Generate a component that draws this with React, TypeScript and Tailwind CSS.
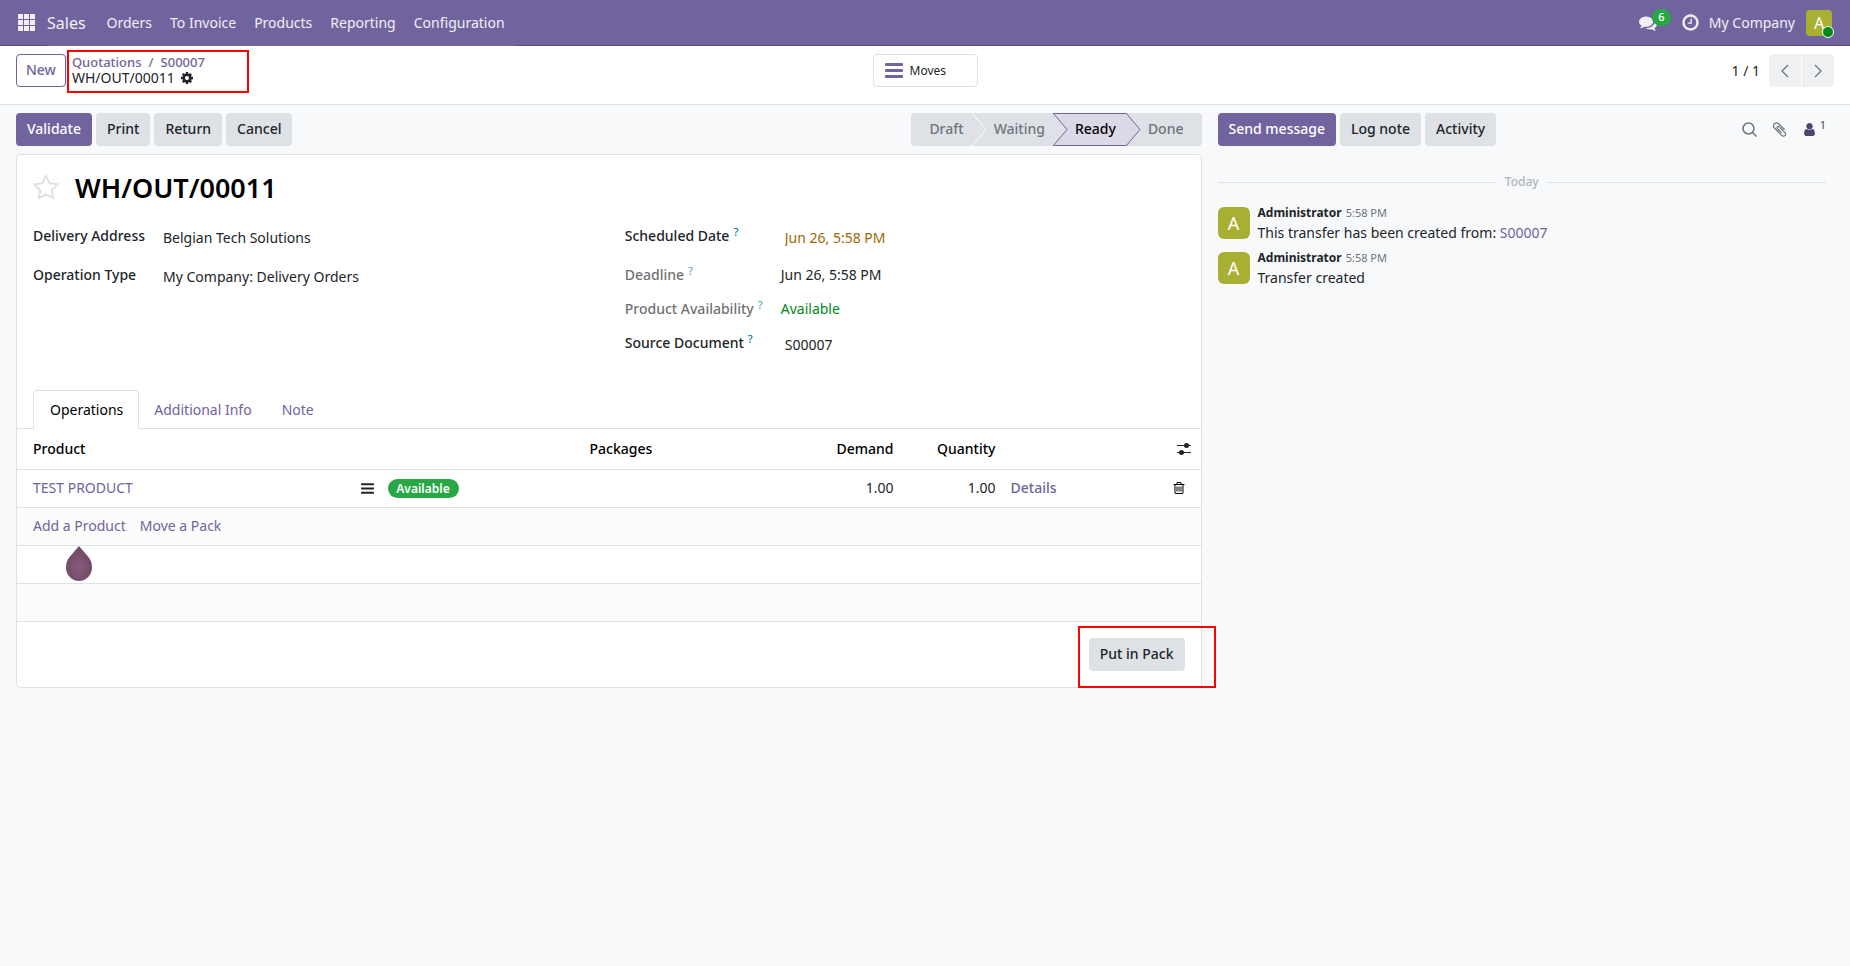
import type { ReactNode } from "react";
import { clsx } from "clsx";

const ICONS = {
  comments:
    "M1408 768q0 139-94 257t-256.5 186.5-353.5 68.5q-86 0-176-16-124 88-278 128-36 9-86 16h-3q-11 0-20.5-8t-11.5-21q-1-3-1-6.5t.5-6.5 2-6l2.5-5 3.5-5.5 4-5 4.5-5 4-4.5q5-6 23-25t26-29.5 22.5-29 25-38.5 20.5-44q-124-72-195-177t-71-224q0-139 94-257t256.5-186.5 353.5-68.5 353.5 68.5 256.5 186.5 94 257zm384 256q0 120-71 224.5t-195 176.5q10 24 20.5 44t25 38.5 22.5 29 26 29.5 23 25q1 1 4 4.5t4.5 5 4 5 3.5 5.5l2.5 5 2 6 .5 6.5-1 6.5q-3 14-13 22t-22 7q-50-7-86-16-154-40-278-128-90 16-176 16-271 0-472-132 58 4 88 4 161 0 309-45t264-129q125-92 192-212t67-254q0-77-23-152 129 71 204 178t75 230z",
  clock:
    "M1024 544v448q0 14-9 23t-23 9h-320q-14 0-23-9t-9-23v-64q0-14 9-23t23-9h224v-352q0-14 9-23t23-9h64q14 0 23 9t9 23zm416 352q0-148-73-273t-198-198-273-73-273 73-198 198-73 273 73 273 198 198 273 73 273-73 198-198 73-273zm224 0q0 209-103 385.5t-279.5 279.5-385.5 103-385.5-103-279.5-279.5-103-385.5 103-385.5 279.5-279.5 385.5-103 385.5 103 279.5 279.5 103 385.5z",
  cog: "M1152 896q0-106-75-181t-181-75-181 75-75 181 75 181 181 75 181-75 75-181zm512-109v222q0 12-8 23t-20 13l-185 28q-19 54-39 91 35 50 107 138 10 12 10 25t-9 23q-27 37-99 108t-94 71q-12 0-26-9l-138-108q-44 23-91 38-16 136-29 186-7 28-36 28h-222q-14 0-24.5-8.5t-11.5-21.5l-28-184q-49-16-90-37l-141 107q-10 9-25 9-14 0-25-11-126-114-165-168-7-10-7-23 0-12 8-23 15-21 51-66.5t54-70.5q-27-50-41-99l-183-27q-13-2-21-12.5t-8-23.5v-222q0-12 8-23t19-13l186-28q14-46 39-92-40-57-107-138-10-12-10-24 0-10 9-23 26-36 98.5-107.5t94.5-71.5q13 0 26 10l138 107q44-23 91-38 16-136 29-186 7-28 36-28h222q14 0 24.5 8.5t11.5 21.5l28 184q49 16 90 37l142-107q9-9 24-9 13 0 25 10 129 119 165 170 7 8 7 22 0 12-8 23-15 21-51 66.5t-54 70.5q26 50 41 98l183 28q13 2 21 12.5t8 23.5z",
  paperclip:
    "M1596 1385q0 117-79 196t-196 79q-135 0-235-100l-777-776q-113-115-113-271 0-159 110-270t269-111q158 0 273 113l605 606q10 10 10 22 0 16-30.5 46.5t-46.5 30.5q-13 0-23-10l-606-607q-79-77-181-77-106 0-179 75t-73 181q0 105 76 181l776 777q63 63 145 63 64 0 106-42t42-106q0-82-63-145l-581-581q-26-24-60-24-29 0-48 19t-19 48q0 32 25 59l410 410q10 10 10 22 0 16-31 47t-47 31q-12 0-22-10l-410-410q-63-61-63-149 0-82 57-139t139-57q88 0 149 63l581 581q100 98 100 235z",
  trash:
    "M704 736v576q0 14-9 23t-23 9h-64q-14 0-23-9t-9-23v-576q0-14 9-23t23-9h64q14 0 23 9t9 23zm256 0v576q0 14-9 23t-23 9h-64q-14 0-23-9t-9-23v-576q0-14 9-23t23-9h64q14 0 23 9t9 23zm256 0v576q0 14-9 23t-23 9h-64q-14 0-23-9t-9-23v-576q0-14 9-23t23-9h64q14 0 23 9t9 23zm128 724v-948h-896v948q0 22 7 40.5t14.5 27 10.5 8.5h832q3 0 10.5-8.5t14.5-27 7-40.5zm-672-1076h448l-48-117q-7-9-17-11h-317q-10 2-17 11zm928 32v64q0 14-9 23t-23 9h-96v948q0 83-47 143.5t-113 60.5h-832q-66 0-113-58.5t-47-141.5v-952h-96q-14 0-23-9t-9-23v-64q0-14 9-23t23-9h309l70-167q15-37 54-63t79-26h320q40 0 79 26t54 63l70 167h309q14 0 23 9t9 23z",
  star: "M1201 1004l306-297-422-62-189-382-189 382-422 62 306 297-73 421 378-199 377 199zm527-357q0 22-26 48l-363 354 86 500q1 7 1 20 0 50-41 50-19 0-40-12l-449-236-449 236q-22 12-40 12-21 0-31.5-14.5t-10.5-35.5q0-6 2-20l86-500-364-354q-25-27-25-48 0-37 56-46l502-73 225-455q19-41 49-41t49 41l225 455 502 73q56 9 56 46z",
  user: "M1536 1399q0 109-62.5 187t-150.5 78h-854q-88 0-150.5-78t-62.5-187q0-85 8.5-160.5t31.5-152 58.5-131 94-89 134.5-34.5q131 128 313 128t313-128q76 0 134.5 34.5t94 89 58.5 131 31.5 152 8.5 160.5zm-256-887q0 159-112.5 271.5t-271.5 112.5-271.5-112.5-112.5-271.5 112.5-271.5 271.5-112.5 271.5 112.5 112.5 271.5z",
  bars: "M1664 1344v128q0 26-19 45t-45 19h-1408q-26 0-45-19t-19-45v-128q0-26 19-45t45-19h1408q26 0 45 19t19 45zm0-512v128q0 26-19 45t-45 19h-1408q-26 0-45-19t-19-45v-128q0-26 19-45t45-19h1408q26 0 45 19t19 45zm0-512v128q0 26-19 45t-45 19h-1408q-26 0-45-19t-19-45v-128q0-26 19-45t45-19h1408q26 0 45 19t19 45z",
};

function Icon({ name, className }: { name: keyof typeof ICONS; className?: string }) {
  return (
    <svg viewBox="0 0 1792 1792" fill="currentColor" aria-hidden="true" className={clsx("shrink-0", className)}>
      <path d={ICONS[name]} />
    </svg>
  );
}

function Button({ primary, children }: { primary?: boolean; children: ReactNode }) {
  return (
    <button
      type="button"
      className={clsx(
        "h-[33px] whitespace-nowrap rounded px-[11px] pb-px font-medium",
        primary ? "bg-[#71639e] text-white" : "bg-[#dee2e6] text-[#212529]",
      )}
    >
      {children}
    </button>
  );
}

const MENUS = ["Orders", "To Invoice", "Products", "Reporting", "Configuration"];

function Navbar() {
  return (
    <header className="flex h-[46px] items-stretch border-b border-[#5a4f7f] bg-[#71639e] text-white/90">
      <button type="button" aria-label="Home menu" className="flex w-[47px] items-center pl-[18px]">
        <svg viewBox="0 0 18 18" fill="currentColor" className="size-[18px]">
          {[0, 6, 12].map((y) => [0, 6, 12].map((x) => <rect key={`${x}-${y}`} x={x} y={y} width="5" height="5" />))}
        </svg>
      </button>
      <nav className="-mb-px flex items-center bg-[#71639e]">
        <a href="#sales" className="pr-3 text-base">
          Sales
        </a>
        {MENUS.map((m) => (
          <a key={m} href="#menu" className="px-[9px]">
            {m}
          </a>
        ))}
      </nav>
      <div className="ml-auto flex items-center pr-4">
        <button type="button" aria-label="Messages" className="relative mr-6">
          <Icon name="comments" className="size-[18px]" />
          <span className="absolute -top-[5px] left-[13px] flex h-[17px] w-[19px] items-center justify-center rounded-full bg-[#28a745] text-[11px] font-medium text-white">
            6
          </span>
        </button>
        <button type="button" aria-label="Activities" className="mr-[9px]">
          <Icon name="clock" className="size-[19px]" />
        </button>
        <button type="button" className="mr-[11px]">
          My Company
        </button>
        <button
          type="button"
          aria-label="User menu"
          className="relative mr-[2px] size-[26px] rounded bg-[#a8b034] text-base leading-[26px] text-white"
        >
          A
          <span className="absolute -bottom-[2px] -right-[2px] size-3 rounded-full border border-white bg-[#008818]" />
        </button>
      </div>
    </header>
  );
}

function Chevron({ d }: { d: string }) {
  return (
    <svg viewBox="0 0 10 14" fill="none" stroke="#6c757d" strokeWidth="1.3" className="h-[14px] w-[10px]">
      <path d={d} />
    </svg>
  );
}

function ControlPanel() {
  return (
    <div className="grid grid-cols-[1fr_auto_1fr] items-start border-b border-[#dee2e6] bg-white px-4 pb-[17px] pt-2">
      <div className="flex items-start">
        <button
          type="button"
          className="h-[33px] rounded border border-[#71639e] px-[9px] pb-px font-medium text-[#71639e]"
        >
          New
        </button>
        <div className="relative ml-[6px] flex flex-col">
          <span className="pointer-events-none absolute -left-[5px] -top-[4px] h-[43px] w-[182px] border-2 border-[#f00]" />
          <div className="text-[13px] font-medium leading-4 text-[#6c757d]">
            <a href="#quotations" className="text-[#71639e]">
              Quotations
            </a>
            <span className="px-[7px]">/</span>
            <a href="#s00007" className="text-[#71639e]">
              S00007
            </a>
          </div>
          <div className="flex items-center gap-[5px] leading-4">
            WH/OUT/00011
            <button type="button" aria-label="Actions">
              <Icon name="cog" className="size-[14px]" />
            </button>
          </div>
        </div>
      </div>
      <button
        type="button"
        className="flex h-[33px] w-[105px] items-center gap-[7px] rounded border border-[#dee2e6] pl-[11px] text-xs"
      >
        <svg viewBox="0 0 18 15" fill="#71639e" className="h-[15px] w-[18px]">
          <rect y="0" width="18" height="3" rx="1" />
          <rect y="6" width="18" height="3" rx="1" />
          <rect y="12" width="18" height="3" rx="1" />
        </svg>
        Moves
      </button>
      <div className="flex items-center justify-end">
        <span className="mr-[9px]">1 / 1</span>
        <button
          type="button"
          aria-label="Previous"
          className="flex h-[33px] w-8 items-center justify-center rounded-l bg-[#eff0f2]"
        >
          <Chevron d="M8 1 2 7l6 6" />
        </button>
        <button
          type="button"
          aria-label="Next"
          className="ml-px flex h-[33px] w-8 items-center justify-center rounded-r bg-[#eff0f2]"
        >
          <Chevron d="m2 1 6 6-6 6" />
        </button>
      </div>
    </div>
  );
}

// The arrow tip of the previous stage, laid over the left edge of the next one.
function Tip({ fill, stroke }: { fill: string; stroke: string }) {
  return (
    <svg viewBox="0 0 15 33" className="absolute left-0 top-0 h-[33px] w-[15px]">
      <path d="M0 0 14 16.5 0 33z" fill={fill} />
      <path d="M0 0 14 16.5 0 33" fill="none" stroke={stroke} strokeWidth="1" />
    </svg>
  );
}

function StatusBar() {
  return (
    <div className="flex h-[33px] font-medium text-[#6c757d]">
      <button type="button" className="rounded-l bg-[#dee2e6] pb-px pl-[18px] pr-2">
        Draft
      </button>
      <button type="button" className="relative bg-[#dee2e6] pb-px pl-[22px] pr-2">
        <Tip fill="#dee2e6" stroke="#fff" />
        Waiting
      </button>
      <button
        type="button"
        aria-current="step"
        className="relative border-y border-[#71639e] bg-[#dcd9e7] pb-px pl-[22px] pr-[10px] text-black"
      >
        <span className="absolute -top-px left-0">
          <Tip fill="#dee2e6" stroke="#71639e" />
        </span>
        Ready
      </button>
      <button type="button" className="relative rounded-r bg-[#dee2e6] pb-px pl-[22px] pr-[18px]">
        <Tip fill="#dcd9e7" stroke="#71639e" />
        Done
      </button>
    </div>
  );
}

function Label({ id, help, muted, children }: { id?: string; help?: boolean; muted?: boolean; children: string }) {
  return (
    <label htmlFor={id} className={clsx("whitespace-nowrap font-medium", muted && "opacity-65")}>
      {children}
      {help && <sup className="ml-1 text-[11px] text-[#017e9b]">?</sup>}
    </label>
  );
}

function Field({ id, label, value, className }: { id: string; label: ReactNode; value: string; className?: string }) {
  return (
    <>
      {label}
      <input id={id} defaultValue={value} className={clsx("w-full bg-transparent pl-1 pt-[2px] outline-none", className)} />
    </>
  );
}

function Details() {
  return (
    <div className="grid grid-cols-2 gap-x-8 px-4 leading-[21px]">
      <div className="grid grid-cols-[126px_1fr] auto-rows-[39px] items-start">
        <Field id="partner" label={<Label id="partner">Delivery Address</Label>} value="Belgian Tech Solutions" />
        <Field id="type" label={<Label id="type">Operation Type</Label>} value="My Company: Delivery Orders" />
      </div>
      <div className="grid grid-cols-[156px_1fr] grid-rows-[39px_34px_34px_34px] items-start">
        <Field
          id="date"
          label={
            <Label id="date" help>
              Scheduled Date
            </Label>
          }
          value="Jun 26, 5:58 PM"
          className="text-[#9a6b01]"
        />
        <Label help muted>
          Deadline
        </Label>
        <span>Jun 26, 5:58 PM</span>
        <Label help muted>
          Product Availability
        </Label>
        <span className="text-[#008818]">Available</span>
        <Field
          id="origin"
          label={
            <Label id="origin" help>
              Source Document
            </Label>
          }
          value="S00007"
        />
      </div>
    </div>
  );
}

function Operations() {
  return (
    <table className="w-full table-fixed border-b border-[#dee2e6]">
      <colgroup>
        <col />
        <col className="w-[26px]" />
        <col className="w-[204px]" />
        <col className="w-[200px]" />
        <col className="w-[114px]" />
        <col className="w-[102px]" />
        <col className="w-[160px]" />
        <col className="w-[40px]" />
      </colgroup>
      <thead>
        <tr className="h-[40px] border-b border-[#dee2e6] text-left text-black">
          <th className="pl-4 font-medium">Product</th>
          <th />
          <th />
          <th className="pl-[5px] font-medium">Packages</th>
          <th className="pr-[5px] text-right font-medium">Demand</th>
          <th className="pr-[5px] text-right font-medium">Quantity</th>
          <th />
          <th>
            <button type="button" aria-label="Optional columns" className="ml-4 block">
              <svg viewBox="0 0 14 12" className="h-3 w-[14px]">
                <path d="M0 2.500h14M0 9.500h14" stroke="#212529" />
                <circle cx="9.500" cy="2.500" r="2.500" fill="#212529" />
                <circle cx="4.500" cy="9.500" r="2.500" fill="#212529" />
              </svg>
            </button>
          </th>
        </tr>
      </thead>
      <tbody>
        <tr className="h-[38px] border-b border-[#dee2e6]">
          <td className="pl-4">
            <a href="#product" className="text-[#71639e]">
              TEST PRODUCT
            </a>
          </td>
          <td>
            <button type="button" aria-label="Product moves" className="ml-[5px] block">
              <Icon name="bars" className="size-[15px]" />
            </button>
          </td>
          <td className="pl-[7px] pt-px">
            <span className="block h-[19px] w-[71px] rounded-full bg-[#28a745] text-center text-xs font-semibold leading-[19px] text-white">
              Available
            </span>
          </td>
          <td />
          <td className="pr-[5px] text-right">1.00</td>
          <td className="pr-[5px] text-right">1.00</td>
          <td className="pl-[10px]">
            <button type="button" className="font-medium text-[#71639e]">
              Details
            </button>
          </td>
          <td>
            <button type="button" aria-label="Delete" className="ml-[11px] block text-black">
              <Icon name="trash" className="size-[14px]" />
            </button>
          </td>
        </tr>
        <tr className="h-[38px] border-b border-[#dee2e6] bg-[#fcfcfc] text-[#71639e]">
          <td colSpan={8} className="pl-4">
            <div className="flex gap-[14px]">
              <span className="relative">
                <a href="#add">Add a Product</a>
                <svg viewBox="0 0 26 35" className="absolute left-[33px] top-[30px] h-[35px] w-[26px]">
                  <defs>
                    <radialGradient id="drop" cx="50%" cy="60%" r="50%">
                      <stop offset="0" stopColor="#875a7b" />
                      <stop offset="1" stopColor="#714b67" />
                    </radialGradient>
                  </defs>
                  <path d="M13 0 22 10.500Q26 15 26 21.500A13 13.500 0 0 1 0 21.500Q0 15 4 10.500z" fill="url(#drop)" />
                </svg>
              </span>
              <a href="#pack">Move a Pack</a>
            </div>
          </td>
        </tr>
        <tr className="h-[38px] border-b border-[#dee2e6]">
          <td colSpan={8} />
        </tr>
        <tr className="h-[38px] bg-[#fcfcfc]">
          <td colSpan={8} />
        </tr>
      </tbody>
    </table>
  );
}

function Sheet() {
  return (
    <section className="mt-2 rounded border border-[#dee2e6] bg-white">
      <div className="flex items-center px-4 pt-3">
        <button type="button" aria-label="Favorite" className="-ml-px text-[#dee2e6]">
          <Icon name="star" className="size-7" />
        </button>
        <h1 className="ml-[15px] text-[27px] font-semibold leading-[42px] text-black">WH/OUT/00011</h1>
      </div>
      <div className="pt-4">
        <Details />
      </div>
      <div role="tablist" className="mt-6 flex h-[39px] border-b border-[#dee2e6] px-4 text-[#71639e]">
        <button
          type="button"
          role="tab"
          aria-selected="true"
          className="-mb-px rounded-t border border-b-0 border-[#dee2e6] bg-white pl-4 pr-[15px] text-black"
        >
          Operations
        </button>
        <button type="button" role="tab" aria-selected="false" className="px-[15px] pt-px">
          Additional Info
        </button>
        <button type="button" role="tab" aria-selected="false" className="px-[15px] pt-px">
          Note
        </button>
      </div>
      <Operations />
      <div className="flex justify-end px-4 py-4">
        <div className="relative">
          <span className="pointer-events-none absolute -bottom-[17px] -left-[11px] -right-[31px] -top-[12px] border-2 border-[#f00]" />
          <Button>Put in Pack</Button>
        </div>
      </div>
    </section>
  );
}

function Message({ children }: { children: ReactNode }) {
  return (
    <article className="flex h-[45px] gap-2">
      <span className="size-8 shrink-0 rounded-md bg-[#a8b034] text-center text-lg leading-8 text-white">A</span>
      <div className="-mt-1">
        <div className="text-[11px] leading-5">
          <strong className="mr-1 text-xs font-bold">Administrator</strong>
          <span className="text-[#6c757d]">5:58 PM</span>
        </div>
        <p className="leading-5">{children}</p>
      </div>
    </article>
  );
}

function Chatter() {
  return (
    <aside className="pl-4 pr-6 pt-2">
      <div className="flex items-center gap-1">
        <Button primary>Send message</Button>
        <Button>Log note</Button>
        <Button>Activity</Button>
        <div className="ml-auto flex items-center text-[#6c757d]">
          <button type="button" aria-label="Search messages" className="mr-[14px]">
            <svg viewBox="0 0 15 15" fill="none" stroke="currentColor" strokeWidth="1.500" className="size-[15px]">
              <circle cx="6.500" cy="6.500" r="5.500" />
              <path d="m10.500 10.500 4 4" />
            </svg>
          </button>
          <button type="button" aria-label="Attachments" className="mr-[14px]">
            <Icon name="paperclip" className="size-[17px]" />
          </button>
          <button type="button" aria-label="Followers" className="flex items-center text-[#4f4470]">
            <Icon name="user" className="size-[15px]" />
            <span className="ml-[3px] pb-[10px] text-[11px] leading-4">1</span>
          </button>
        </div>
      </div>
      <div className="mt-[26px] flex items-center gap-2 text-xs leading-5 text-[#adb5bd]">
        <hr className="flex-1 border-[#dee2e6]" />
        <span className="font-medium">Today</span>
        <hr className="flex-1 border-[#dee2e6]" />
      </div>
      <div className="mt-[15px]">
        <Message>
          This transfer has been created from:{" "}
          <a href="#s00007" className="text-[#71639e]">
            S00007
          </a>
        </Message>
        <Message>Transfer created</Message>
      </div>
    </aside>
  );
}

export default function App() {
  return (
    <div className="min-h-screen bg-[#f8f9fa] font-['Noto_Sans',sans-serif] text-sm text-[#212529]">
      <Navbar />
      <ControlPanel />
      <main className="grid grid-cols-[calc(65%-1px)_1fr] items-start">
        <div className="pl-4 pt-2">
          <div className="flex items-center justify-between">
            <div className="flex gap-1">
              <Button primary>Validate</Button>
              <Button>Print</Button>
              <Button>Return</Button>
              <Button>Cancel</Button>
            </div>
            <StatusBar />
          </div>
          <Sheet />
        </div>
        <Chatter />
      </main>
    </div>
  );
}
